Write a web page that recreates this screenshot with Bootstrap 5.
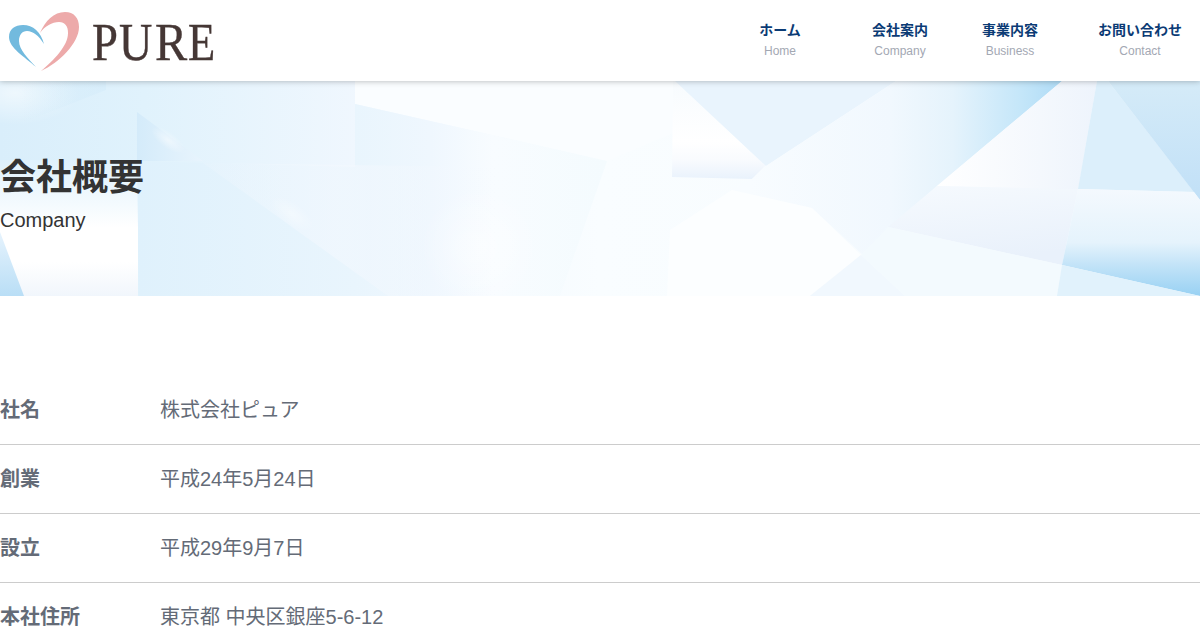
<!doctype html>
<html lang="ja">

<head>
  <meta charset="utf-8">
  <meta name="viewport" content="width=device-width, initial-scale=1">
  <title>会社概要 | PURE</title>
  <link href="https://cdn.jsdelivr.net/npm/bootstrap@5.3.0/dist/css/bootstrap.min.css" rel="stylesheet">
  <style>
    body {
      font-family: "Liberation Sans", "Noto Sans CJK JP", sans-serif;
      color: #646b77;
      overflow: hidden;
    }

    .site-header {
      height: 81px;
      z-index: 2;
      box-shadow: 0 0 6px rgba(0, 0, 0, 0.3);
    }

    .menu-item {
      padding: 20px 0 0;
      line-height: 20px;
      font-size: 14px;
      font-weight: bold;
      color: #0b3b75;
    }

    .menu-item span {
      display: block;
      font-size: 12px;
      font-weight: normal;
      line-height: 22px;
      color: #a3a8b3;
    }

    .menu-home {
      width: 160px;
    }

    .menu-company {
      width: 80px;
    }

    .menu-business {
      width: 140px;
    }

    .menu-contact {
      width: 120px;
    }

    .page-hero {
      height: 215px;
      padding-top: 72px;
      color: #333;
    }

    .hero-bg {
      position: absolute;
      top: 0;
      left: 0;
      z-index: -1;
    }

    .page-hero h1 {
      font-size: 36px;
      font-weight: bold;
      line-height: 50px;
      margin: 0;
    }

    .page-hero p {
      font-size: 20px;
      line-height: 34px;
      margin: 0;
    }

    .profile {
      padding-top: 80px;
      font-size: 20px;
    }

    .profile-row {
      height: 69px;
      border-bottom: 1px solid #ccc;
    }

    .profile-row dt {
      width: 160px;
    }
  </style>
</head>

<body>

  <header class="site-header bg-white position-relative d-flex justify-content-between">
    <a href="#" aria-label="PURE">
      <svg width="230" height="81" viewBox="0 0 230 81">
        <path fill="#72bade" d="M36 67C25 57 9 48 9 37C9 29 15 25 23 25C33 25 41 32 44 44C39 36 33 31 27 31C22 31 19 35 19 41C19 50 28 58 36 67Z" />
        <path fill="#edaaaa" d="M40 33C45 21 54 12 65 12C74 12 79 18 79 27C79 43 59 63 41 71C54 60 68 46 68 33C68 26 65 22 59 22C52 22 45 26 40 33Z" />
        <g font-family="Liberation Serif, serif" font-size="53" fill="#453735" stroke="#453735" stroke-width=".4">
          <text transform="translate(92 60) scale(.88 1)">P</text>
          <text transform="translate(119 60) scale(.87 1)">U</text>
          <text transform="translate(155 60) scale(.91 1)">R</text>
          <text transform="translate(188 60) scale(.84 1)">E</text>
        </g>
      </svg>
    </a>
    <nav class="d-flex text-center">
      <a href="#" class="menu-item menu-home text-decoration-none">ホーム<span>Home</span></a>
      <a href="#" class="menu-item menu-company text-decoration-none">会社案内<span>Company</span></a>
      <a href="#" class="menu-item menu-business text-decoration-none">事業内容<span>Business</span></a>
      <a href="#" class="menu-item menu-contact text-decoration-none">お問い合わせ<span>Contact</span></a>
    </nav>
  </header>

  <section class="page-hero position-relative z-1">
    <svg class="hero-bg" width="1200" height="215" viewBox="0 81 1200 215">
      <defs>
        <linearGradient id="base">
          <stop offset="0" stop-color="#d9eefb" />
          <stop offset=".12" stop-color="#e0f2fc" />
          <stop offset=".3" stop-color="#f0f7fe" />
          <stop offset=".5" stop-color="#f9fdff" />
          <stop offset="1" stop-color="#f5fafe" />
        </linearGradient>
        <linearGradient id="leftFade" x2="0" y2="1">
          <stop offset="0" stop-color="#dff1fc" />
          <stop offset=".5" stop-color="#fff" />
          <stop offset=".75" stop-color="#fff" />
          <stop offset="1" stop-color="#f1f6fc" />
        </linearGradient>
        <linearGradient id="corner" x2="0" y2="1">
          <stop offset="0" stop-color="#e6f3fd" />
          <stop offset="1" stop-color="#b9def6" />
        </linearGradient>
        <linearGradient id="wide">
          <stop offset="0" stop-color="#dff1fc" />
          <stop offset="1" stop-color="#e9f5fd" />
        </linearGradient>
        <linearGradient id="mid">
          <stop offset="0" stop-color="#e9f5fd" />
          <stop offset=".3" stop-color="#eff7fe" />
          <stop offset=".55" stop-color="#f8fcff" />
          <stop offset="1" stop-color="#f4fbfe" />
        </linearGradient>
        <linearGradient id="band" x2="0" y2="1">
          <stop offset="0" stop-color="#f7fbfe" />
          <stop offset=".62" stop-color="#fff" />
          <stop offset=".8" stop-color="#f9fbfe" />
          <stop offset="1" stop-color="#e9f2fc" />
        </linearGradient>
        <linearGradient id="blueRight" gradientUnits="userSpaceOnUse" x1="750" y1="0" x2="1062" y2="0">
          <stop offset="0" stop-color="#f8fcff" />
          <stop offset=".45" stop-color="#f1f8fe" />
          <stop offset=".65" stop-color="#e5f3fc" />
          <stop offset=".87" stop-color="#c4e6f9" />
          <stop offset="1" stop-color="#afdbf6" />
        </linearGradient>
        <linearGradient id="shard">
          <stop offset="0" stop-color="#fff" />
          <stop offset="1" stop-color="#eef4fc" />
        </linearGradient>
        <linearGradient id="topRight" x2="0" y2="1">
          <stop offset="0" stop-color="#d5ebf8" />
          <stop offset="1" stop-color="#c1e0f7" />
        </linearGradient>
        <linearGradient id="lower" x2="0" y2="1">
          <stop offset="0" stop-color="#f4f9fe" />
          <stop offset=".5" stop-color="#e5f3fc" />
          <stop offset=".7" stop-color="#c4e4f8" />
          <stop offset="1" stop-color="#98d1f3" />
        </linearGradient>
        <linearGradient id="lilac" x2=".3" y2="1">
          <stop offset="0" stop-color="#f6fafe" />
          <stop offset="1" stop-color="#e9f1fb" />
        </linearGradient>
        <linearGradient id="glint">
          <stop offset="0" stop-color="#f3f8fe" stop-opacity=".3" />
          <stop offset=".45" stop-color="#f3f8fe" />
          <stop offset="1" stop-color="#f3f8fe" stop-opacity="0" />
        </linearGradient>
        <linearGradient id="fleck">
          <stop offset="0" stop-color="#d4ebfa" />
          <stop offset="1" stop-color="#e8f4fd" />
        </linearGradient>
        <linearGradient id="wedge">
          <stop offset="0" stop-color="#cfe9f9" stop-opacity="0" />
          <stop offset="1" stop-color="#cfe9f9" />
        </linearGradient>
        <radialGradient id="glow">
          <stop offset="0" stop-color="#fff" />
          <stop offset="1" stop-color="#fff" stop-opacity="0" />
        </radialGradient>
      </defs>
      <rect y="81" width="1200" height="215" fill="url(#base)" />
      <ellipse cx="15" cy="93" rx="65" ry="32" fill="url(#glow)" opacity=".55" />
      <path d="M20 81H106V90L50 112L20 124Z" fill="url(#wedge)" opacity=".4" />
      <!-- left panels -->
      <path d="M0 160H138V296H0Z" fill="url(#leftFade)" />
      <path d="M0 232L24 296H0Z" fill="url(#corner)" />
      <path d="M137 161L356 167V296H139Z" fill="url(#wide)" />
      <path d="M137 112L203 161H137Z" fill="url(#fleck)" />
      <ellipse cx="168" cy="140" rx="20" ry="8" transform="rotate(36 168 140)" fill="url(#glow)" opacity=".5" />
      <!-- centre panels -->
      <path d="M355 81H680V130L607 161L355 104Z" fill="#fafdff" />
      <path d="M355 104L607 161L560 296H355Z" fill="url(#mid)" />
      <path d="M203 163L388 296H500V167Z" fill="url(#glint)" opacity=".6" />
      <ellipse cx="292" cy="214" rx="26" ry="11" transform="rotate(36 292 214)" fill="url(#glow)" opacity=".35" />
      <circle cx="480" cy="247" r="60" fill="url(#glow)" opacity=".5" />
      <path d="M673 81H700L766 165L752 179L672 177Z" fill="url(#band)" />
      <path d="M675 81H896L766 166Z" fill="#e9f4fd" />
      <path d="M896 81H1062L937 186L862 254L812 208L730 190L752 179L766 166Z" fill="url(#blueRight)" />
      <path d="M670 230L732 190L812 208L861 255L810 296H667Z" fill="#fcfeff" />
      <!-- right panels -->
      <path d="M1062 81H1097L1078 190L937 186Z" fill="url(#shard)" />
      <path d="M1097 81H1108L1194 192L1078 189Z" fill="#dceffb" />
      <path d="M1108 81H1200V200Z" fill="url(#topRight)" />
      <path d="M937 186L1078 189L1062 265L888 227Z" fill="url(#lilac)" />
      <path d="M1078 189L1194 192L1200 200V296L1062 265Z" fill="url(#lower)" />
      <path d="M861 255L810 296H905Z" fill="#f1f8fe" />
      <path d="M888 227L1062 265L1057 296H905L861 255Z" fill="#f3fafe" />
      <path d="M1062 265L1200 296H1057Z" fill="#e1f2fc" />
    </svg>
    <h1>会社概要</h1>
    <p>Company</p>
  </section>

  <main class="profile">
    <dl class="mb-0">
      <div class="profile-row d-flex align-items-center">
        <dt>社名</dt>
        <dd class="mb-0">株式会社ピュア</dd>
      </div>
      <div class="profile-row d-flex align-items-center">
        <dt>創業</dt>
        <dd class="mb-0">平成24年5月24日</dd>
      </div>
      <div class="profile-row d-flex align-items-center">
        <dt>設立</dt>
        <dd class="mb-0">平成29年9月7日</dd>
      </div>
      <div class="profile-row d-flex align-items-center">
        <dt>本社住所</dt>
        <dd class="mb-0">東京都 中央区銀座5-6-12</dd>
      </div>
    </dl>
  </main>

  <script src="https://cdn.jsdelivr.net/npm/bootstrap@5.3.0/dist/js/bootstrap.bundle.min.js"></script>
</body>

</html>
